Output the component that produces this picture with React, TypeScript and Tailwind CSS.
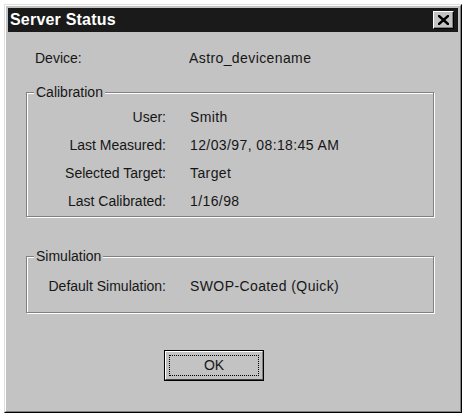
import React from "react";

const font = { fontFamily: '"Liberation Sans", Arial, sans-serif' };

function GroupBox({
  title,
  className,
  children,
}: {
  title: string;
  className?: string;
  children: React.ReactNode;
}) {
  return (
    <div
      className={`relative w-[408px] border border-[#808080] shadow-[inset_1px_1px_0_#ffffff,1px_1px_0_#ffffff] ${className ?? ""}`}
    >
      <span className="absolute left-[7px] top-[-9px] bg-[#c3c3c3] px-[2px] text-[14px] leading-[16px]">
        {title}
      </span>
      {children}
    </div>
  );
}

function Row({ label, value }: { label: string; value: string }) {
  return (
    <div className="flex h-[28px] items-center">
      <div className="w-[139px] text-right">{label}</div>
      <div className="pl-[24px] tracking-[0.4px]">{value}</div>
    </div>
  );
}

export default function App() {
  return (
    <div
      className="h-[415px] w-[468px] bg-white pl-[4px] pt-[4px] text-[14px] text-[#161616]"
      style={font}
    >
      <div className="h-[409px] w-[458px] border border-t-[#dfdfdf] border-l-[#dfdfdf] border-r-black border-b-black bg-[#c3c3c3]">
        <div className="h-full w-full border border-t-white border-l-white border-r-[#808080] border-b-[#808080] p-[2px]">
          {/* title bar */}
          <div className="flex h-[24px] items-center justify-between bg-[#1a1a1a] pl-[2px] pr-[4px]">
            <span className="text-[16px] font-bold tracking-[0.2px] text-white">
              Server Status
            </span>
            <button
              type="button"
              className="flex h-[18px] w-[21px] items-center justify-center border border-t-white border-l-white border-r-black border-b-black bg-[#c3c3c3] shadow-[inset_-1px_-1px_0_#808080]"
            >
              <svg width="11" height="10" viewBox="0 0 11 10">
                <path
                  d="M1 1 L10 9 M10 1 L1 9"
                  stroke="#000"
                  strokeWidth="2.4"
                  strokeLinecap="square"
                />
              </svg>
            </button>
          </div>

          {/* content */}
          <div className="pl-[18px] pt-[12px]">
            <div className="flex h-[28px] items-center">
              <div className="w-[163px] pl-[9px]">Device:</div>
              <div className="tracking-[0.4px]">Astro_devicename</div>
            </div>

            <GroupBox title="Calibration" className="mt-[20px] pb-[1px] pt-[10px]">
              <Row label="User:" value="Smith" />
              <Row label="Last Measured:" value="12/03/97, 08:18:45 AM" />
              <Row label="Selected Target:" value="Target" />
              <Row label="Last Calibrated:" value="1/16/98" />
            </GroupBox>

            <GroupBox title="Simulation" className="mt-[39px] pb-[12px] pt-[15px]">
              <Row label="Default Simulation:" value="SWOP-Coated (Quick)" />
            </GroupBox>

            <div className="ml-[138px] mt-[37px] h-[31px] w-[100px] border border-black">
              <div className="flex h-full w-full items-center justify-center border border-t-white border-l-white border-r-[#808080] border-b-[#404040] p-[3px]">
                <div className="flex h-full w-full items-center justify-center border border-dotted border-black">
                  OK
                </div>
              </div>
            </div>
          </div>
        </div>
      </div>
    </div>
  );
}
